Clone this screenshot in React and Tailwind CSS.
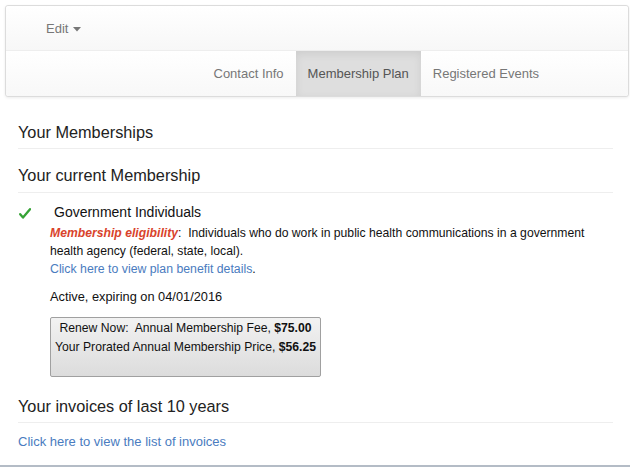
export default function App() {
  return (
    <div className="w-[630px] h-[467px] bg-white overflow-hidden flex flex-col font-['Liberation_Sans',Arial,sans-serif] border-b-2 border-[#b4bcc6]">
      {/* Navbar */}
      <div className="mx-[5px] mt-[5px] w-[624px] border border-[#dcdcdc] rounded-[3px] shadow-[0_1px_3px_rgba(0,0,0,0.08)] bg-white">
        <div className="h-[44px] flex items-center pl-[40px] pt-[2px] bg-gradient-to-b from-white to-[#f7f7f7] rounded-t-[3px]">
          <span className="text-[13px] text-[#777]">Edit</span>
          <svg width="8" height="5" viewBox="0 0 8 5" className="ml-[5px] mt-[1px]">
            <path d="M0 0 L8 0 L4 4.5 Z" fill="#777" />
          </svg>
        </div>
        <div className="h-[46px] border-t border-[#eeeeee] flex justify-end pr-[77px] bg-gradient-to-b from-white to-[#f8f8f8] rounded-b-[3px]">
          <div className="px-[12px] flex items-center text-[13px] text-[#777]">Contact Info</div>
          <div className="px-[12px] flex items-center text-[13px] text-[#555] bg-[#dedede] shadow-[inset_0_3px_9px_rgba(0,0,0,0.08)]">Membership Plan</div>
          <div className="px-[12px] flex items-center text-[13px] text-[#777]">Registered Events</div>
        </div>
      </div>

      {/* Content */}
      <div className="pl-[18px] pr-[17px]">
        <div className="mt-[25px] pb-[6px] border-b border-[#eeeeee] text-[16.3px] leading-[20px] text-[#222]">Your Memberships</div>
        <div className="mt-[16px] pb-[7px] border-b border-[#eeeeee] text-[16.3px] leading-[20px] text-[#222]">Your current Membership</div>

        <div className="mt-[10px] flex">
          <div className="w-[32px] shrink-0 pt-[5px]">
            <svg width="12" height="11" viewBox="0 0 12 11" className="ml-[1px]">
              <path d="M1.2 6.2 L4 9.6 L11 1.2" fill="none" stroke="#36a336" strokeWidth="2.3" strokeLinecap="round" strokeLinejoin="round" />
            </svg>
          </div>
          <div className="flex-1">
            <div className="pl-[4px] text-[14px] leading-[18px] text-[#111]">Government Individuals</div>
            <div className="mt-[3px] text-[12.2px] leading-[18px] text-[#111] pr-[20px]">
              <span className="font-bold italic text-[#d9432b]">Membership eligibility</span>:&nbsp; Individuals who do work in public health communications in a government health agency (federal, state, local).
            </div>
            <div className="text-[12.3px] leading-[18px] text-[#4a7cc0]">Click here to view plan benefit details<span className="text-[#111]">.</span></div>
            <div className="mt-[10px] text-[12.8px] leading-[18px] text-[#111]">Active, expiring on 04/01/2016</div>
            <div className="mt-[11px] w-[271px] h-[60px] border border-[#a0a0a0] rounded-[2px] bg-gradient-to-b from-[#f2f2f2] to-[#dcdcdc] text-center text-[12.2px] leading-[19px] text-[#111] pt-[1px] whitespace-nowrap">
              <div>Renew Now:&nbsp; Annual Membership Fee, <b>$75.00</b></div>
              <div>Your Prorated Annual Membership Price, <b>$56.25</b></div>
            </div>
          </div>
        </div>

        <div className="mt-[19px] pb-[6px] border-b border-[#eeeeee] text-[16.3px] leading-[20px] text-[#222]">Your invoices of last 10 years</div>
        <div className="mt-[10px] text-[13px] leading-[18px] text-[#4a7cc0]">Click here to view the list of invoices</div>
      </div>
    </div>
  );
}
